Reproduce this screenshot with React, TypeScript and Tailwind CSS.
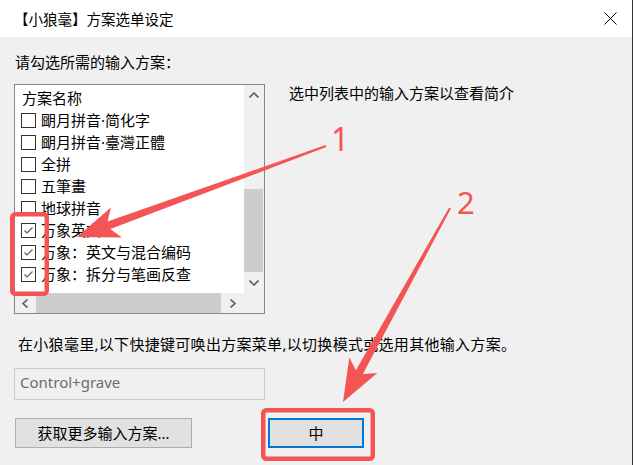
import React from 'react';

const schemes = [
  { name: '朙月拼音·简化字', checked: false },
  { name: '朙月拼音·臺灣正體', checked: false },
  { name: '全拼', checked: false },
  { name: '五筆畫', checked: false },
  { name: '地球拼音', checked: false },
  { name: '万象英文', checked: true },
  { name: '万象：英文与混合编码', checked: true },
  { name: '万象：拆分与笔画反查', checked: true },
];

function CheckBox({ checked }: { checked: boolean }) {
  return (
    <div className="w-[15px] h-[15px] shrink-0 border border-[#333333] bg-white">
      {checked && (
        <svg width="13" height="13" viewBox="0 0 13 13">
          <polyline points="2.5,6.5 5,9 10.5,3.5" fill="none" stroke="#5f5f5f" strokeWidth="1.2" />
        </svg>
      )}
    </div>
  );
}

function Chevron({ dir }: { dir: 'up' | 'down' | 'left' | 'right' }) {
  const pts = {
    up: '0.5,5.5 5,1 9.5,5.5',
    down: '0.5,0.5 5,5 9.5,0.5',
    left: '5.5,0.5 1,4.5 5.5,8.5',
    right: '0.5,0.5 5,4.5 0.5,8.5',
  }[dir];
  const vertical = dir === 'up' || dir === 'down';
  return (
    <svg width={vertical ? 10 : 6} height={vertical ? 6 : 9} viewBox={vertical ? '0 0 10 6' : '0 0 6 9'}>
      <polyline points={pts} fill="none" stroke="#606060" strokeWidth="1.6" />
    </svg>
  );
}

function SchemeList() {
  return (
    <div className="w-[251px] h-[230px] shrink-0 border border-[#828790] bg-white flex flex-col">
      <div className="flex h-[208px]">
        {/* Rows */}
        <div className="w-[229px] pt-[2px] overflow-hidden">
          <div className="h-[22px] leading-[22px] pl-[7px]">方案名称</div>
          {schemes.map((s) => (
            <div key={s.name} className="h-[22px] flex items-center pl-[6px] gap-[5px] whitespace-nowrap">
              <CheckBox checked={s.checked} />
              <span className="leading-[22px]">{s.name}</span>
            </div>
          ))}
        </div>
        {/* Vertical scrollbar */}
        <div className="w-[20px] bg-[#f0f0f0] flex flex-col">
          <div className="h-[20px] flex items-center justify-center">
            <Chevron dir="up" />
          </div>
          <div className="flex-1 flex flex-col justify-end pb-[1px]">
            <div className="h-[83px] w-[19px] bg-[#cdcdcd]" />
          </div>
          <div className="h-[20px] flex items-center justify-center">
            <Chevron dir="down" />
          </div>
        </div>
      </div>
      {/* Horizontal scrollbar */}
      <div className="flex h-[20px] bg-[#f0f0f0]">
        <div className="w-[20px] flex items-center justify-center">
          <Chevron dir="left" />
        </div>
        <div className="ml-[1px] w-[185px] bg-[#cdcdcd]" />
        <div className="w-[23px] flex items-center justify-center">
          <Chevron dir="right" />
        </div>
        <div className="w-[20px]" />
      </div>
    </div>
  );
}

export default function App() {
  return (
    <div className="relative w-[633px] h-[465px] overflow-hidden bg-[#f0f0f0] border-r border-[#333333] text-black text-[15px] font-['Noto_Sans','Noto_Sans_CJK_SC',sans-serif]">
      {/* Title bar */}
      <div className="h-[37px] bg-white flex items-center justify-between pl-[14px] pr-[15px]">
        <span className="leading-[22px] text-[14.5px]">【小狼毫】方案选单设定</span>
        <svg width="13" height="13" viewBox="0 0 13 13">
          <path d="M0.5 0.5 L12.5 12.5 M12.5 0.5 L0.5 12.5" stroke="#000" strokeWidth="1" />
        </svg>
      </div>

      {/* Body */}
      <div className="pl-[14px] pt-[14px]">
        <div className="leading-[22px] pl-[1px]">请勾选所需的输入方案：</div>

        <div className="flex mt-[11px]">
          <SchemeList />
          <div className="ml-[24px] leading-[18px]">选中列表中的输入方案以查看简介</div>
        </div>

        <div className="mt-[19px] leading-[22px] pl-[4px] tracking-[0.3px]">
          在小狼毫里,以下快捷键可唤出方案菜单,以切换模式或选用其他输入方案。
        </div>

        <div className="mt-[13px] w-[251px] h-[32px] border border-[#cccccc] bg-[#f0f0f0] pl-[5px] pt-[2px] leading-[22px] text-[#6d6d6d]">
          Control+grave
        </div>

        <div className="mt-[18px] flex items-center">
          <button className="ml-[1px] w-[177px] h-[30px] border border-[#adadad] bg-[#e1e1e1] leading-[22px]">
            获取更多输入方案...
          </button>
          <button className="ml-[76px] w-[96px] h-[30px] border-2 border-[#0078d7] bg-[#e1e1e1] leading-[22px]">
            中
          </button>
        </div>
      </div>

      {/* Annotations */}
      <svg className="absolute inset-0 pointer-events-none" width="633" height="465" viewBox="0 0 633 465">
        <rect x="12.25" y="214.25" width="34.5" height="79.5" rx="3" fill="none" stroke="#f55454" strokeWidth="4.5" />
        <rect x="263.25" y="410.25" width="109.5" height="48.5" rx="3" fill="none" stroke="#f55454" strokeWidth="4.5" />
        <polygon
          points="77,237 121.9,237.6 110.3,229.1 326.3,146.9 325.7,145.1 107.5,221.5 110.9,207.6"
          fill="#f55454"
        />
        <polygon
          points="343,402 377.3,372.9 362.9,374.1 450.9,208.5 449.1,207.5 355.9,370.3 349.3,357.5"
          fill="#f55454"
        />
      </svg>
      <span className="absolute left-[331px] top-[123px] text-[32px] leading-none text-[#f55454]">1</span>
      <span className="absolute left-[457px] top-[187px] text-[31px] leading-none text-[#f55454]">2</span>
    </div>
  );
}
